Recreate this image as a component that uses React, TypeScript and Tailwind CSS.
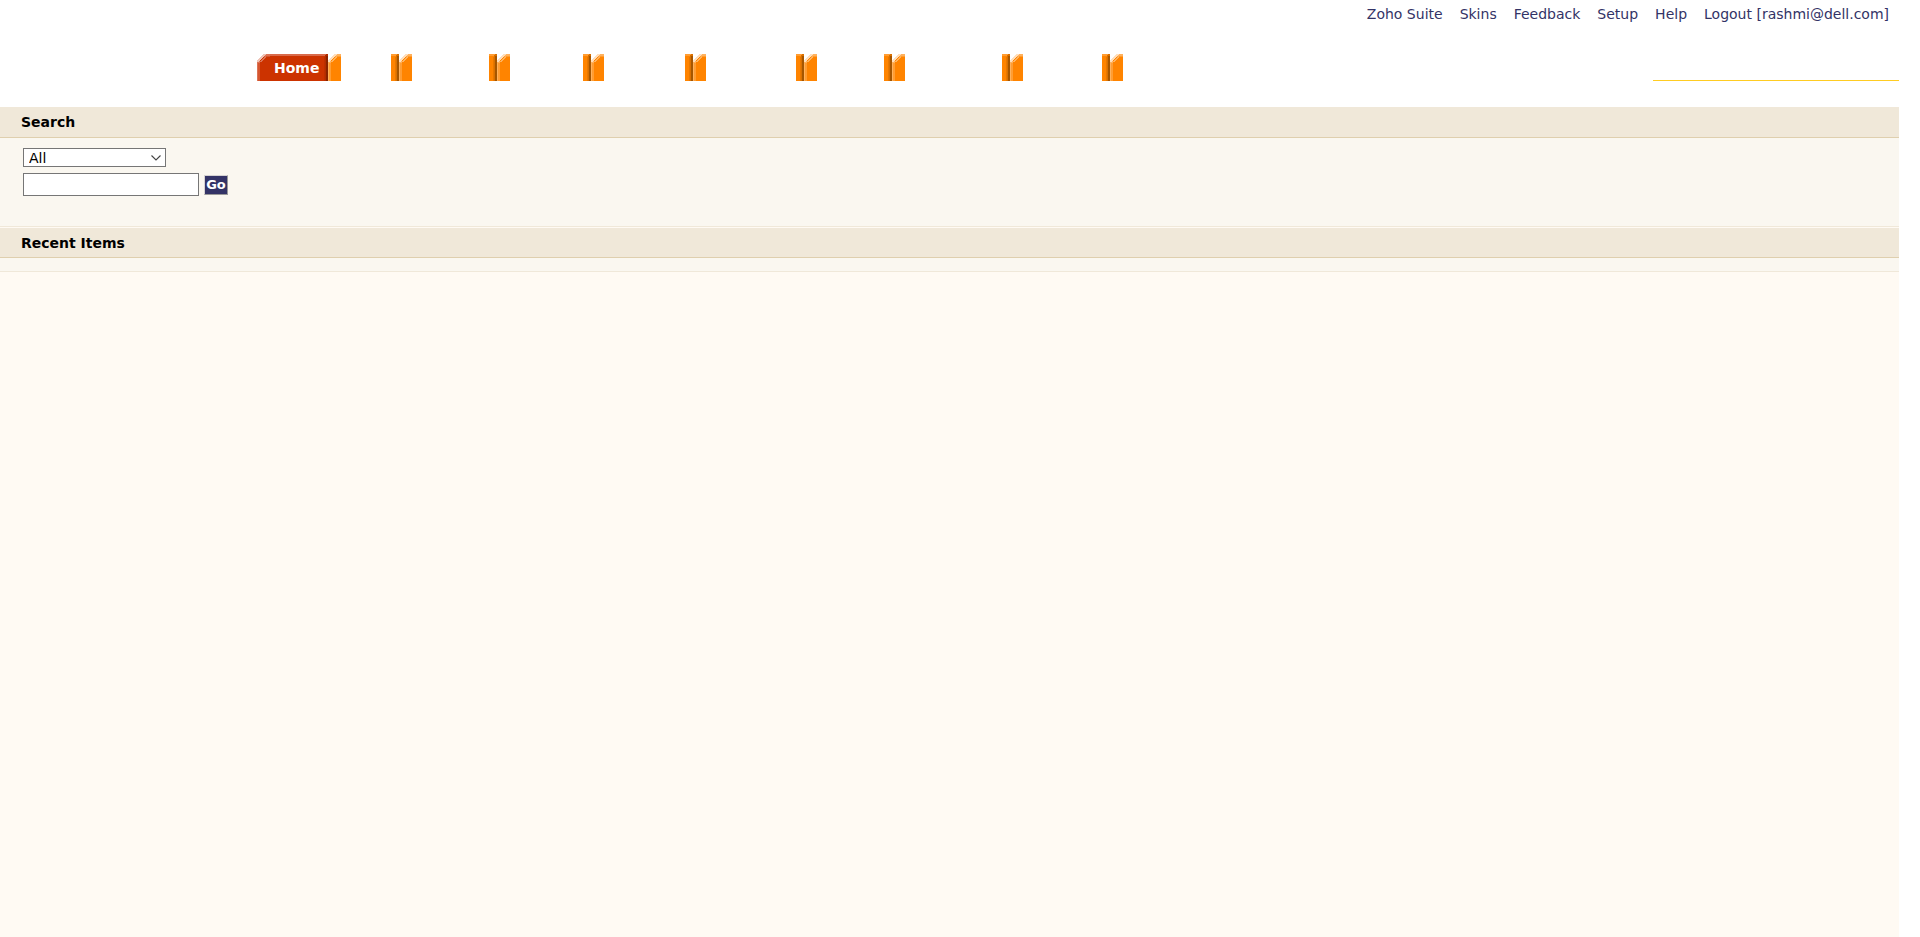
import React from "react";

const links = ["Zoho Suite", "Skins", "Feedback", "Setup", "Help", "Logout [rashmi@dell.com]"];

const tabWidths = ["w-[50px]", "w-[77px]", "w-[73px]", "w-[81px]", "w-[90px]", "w-[67px]", "w-[97px]", "w-[79px]"];

function LeftCap({ base, light, pale }: { base: string; light: string; pale: string }) {
  return (
    <svg width="13" height="27" viewBox="0 0 13 27" className="shrink-0" aria-hidden="true" shapeRendering="crispEdges">
      <path d="M0 27V8h1V7h1V6h1V5h1V4h1V3h1V2h1V1h1V0h5v27z" fill={base} />
      <path d="M0 8h1v19H0z" fill={light} />
      <path d="M1 8h2v19H1z" fill={light} opacity=".55" />
      <path d="M8 0h5v2H8z" fill={light} />
      <path d="M7 2h6v1H7z" fill={light} opacity=".5" />
      <path d="M0 6h1V5h1V4h1V3h1V2h1V1h1V0h3v1H8v1H7v1H6v1H5v1H4v1H3v1H2v1H0z" fill={pale} />
      <path d="M1 9V8h1V7h2V6h1V5h1V4h1V3h1V2h1v2H8v1H7v1H6v1H5v1H3v1z" fill={light} />
    </svg>
  );
}

function RightCap({ base, light, mid, dark }: { base: string; light: string; mid: string; dark: string }) {
  return (
    <svg width="8" height="27" viewBox="0 0 8 27" className="shrink-0" aria-hidden="true" shapeRendering="crispEdges">
      <path d="M0 0h8v27H0z" fill={base} />
      <path d="M0 0h7v2H0z" fill={light} />
      <path d="M4 3h1v24H4z" fill={mid} opacity=".6" />
      <path d="M5 1h1v26H5z" fill={mid} />
      <path d="M6 2h2v25H6z" fill={dark} />
      <path d="M6 0h2v2H6z" fill={mid} />
    </svg>
  );
}

function BlankTab({ width }: { width: string }) {
  return (
    <li className="flex">
      <LeftCap base="#ff8400" light="#ffb25d" pale="#ffdfbd" />
      <span className={width} />
      <RightCap base="#ff8400" light="#ff9d33" mid="#d97000" dark="#a65600" />
    </li>
  );
}

function SectionTitle({ height, children }: { height: string; children: React.ReactNode }) {
  return (
    <h2 className={`flex items-center bg-[#f0e8d9] px-[21px] text-[14px] font-bold ${height}`}>{children}</h2>
  );
}

export default function App() {
  return (
    <div className="flex min-h-screen flex-col bg-white pr-[21px] font-['DejaVu_Sans',Verdana,sans-serif] text-[14px] leading-5 text-black">
      <header className="h-[107px]">
        <nav aria-label="Account" className="flex h-[54px] items-start justify-end gap-[17px] pr-[10px] pt-1 text-[#333366]">
          {links.map((label) => (
            <a key={label} href="#" className="whitespace-nowrap">
              {label}
            </a>
          ))}
        </nav>
        <div className="flex items-end justify-between pl-[257px]">
          <ul className="flex">
            <li className="flex">
              <LeftCap base="#cc3300" light="#dc7355" pale="#efc4b7" />
              <a
                href="#"
                className="flex h-[27px] items-center border-t-2 border-[#d96a4a] bg-[#cc3300] pb-[2px] pl-1 pr-px text-[14px] font-bold text-white"
              >
                Home
              </a>
              <RightCap base="#cc3300" light="#d96a4a" mid="#b32d00" dark="#8a2300" />
            </li>
            {tabWidths.map((width) => (
              <BlankTab key={width} width={width} />
            ))}
            <li className="flex">
              <LeftCap base="#ff8400" light="#ffb25d" pale="#ffdfbd" />
            </li>
          </ul>
          <div className="w-[246px] border-b border-[#ffcc22]" />
        </div>
      </header>

      <main className="flex grow flex-col bg-[#fffaf3]">
        <section>
          <SectionTitle height="h-[30px]">Search</SectionTitle>
          <form className="h-[90px] border-y border-t-[#dfcfae] border-b-[#f0e8d9] bg-[#faf7f0] px-[23px] pt-[10px]">
            <div className="relative flex w-[143px]">
              <select
                aria-label="Search in"
                className="h-[19px] w-full appearance-none border border-[#767676] bg-white pl-[5px] text-[14px] leading-4"
              >
                <option>All</option>
              </select>
              <svg
                width="10"
                height="6"
                viewBox="0 0 10 6"
                className="pointer-events-none absolute right-[5px] top-[7px]"
                aria-hidden="true"
              >
                <path d="M.5.5 5 5 9.500.5" fill="none" stroke="#444" strokeWidth="1.100" />
              </svg>
            </div>
            <div className="mt-[6px] flex items-end gap-[5px]">
              <input type="text" aria-label="Search text" className="h-[23px] w-[176px] border border-[#767676] bg-white px-1" />
              <button
                type="submit"
                className="mb-px flex h-5 w-6 items-center justify-center border border-[#d5d2d2] border-b-[#999999] border-r-[#999999] bg-[#333366] text-[13px] font-bold text-white"
              >
                Go
              </button>
            </div>
          </form>
        </section>
        <section className="mt-px">
          <SectionTitle height="h-[29px]">Recent Items</SectionTitle>
          <div className="h-[15px] border-y border-t-[#dfcfae] border-b-[#f0e8d9] bg-[#faf7f0]" />
        </section>
      </main>
    </div>
  );
}
